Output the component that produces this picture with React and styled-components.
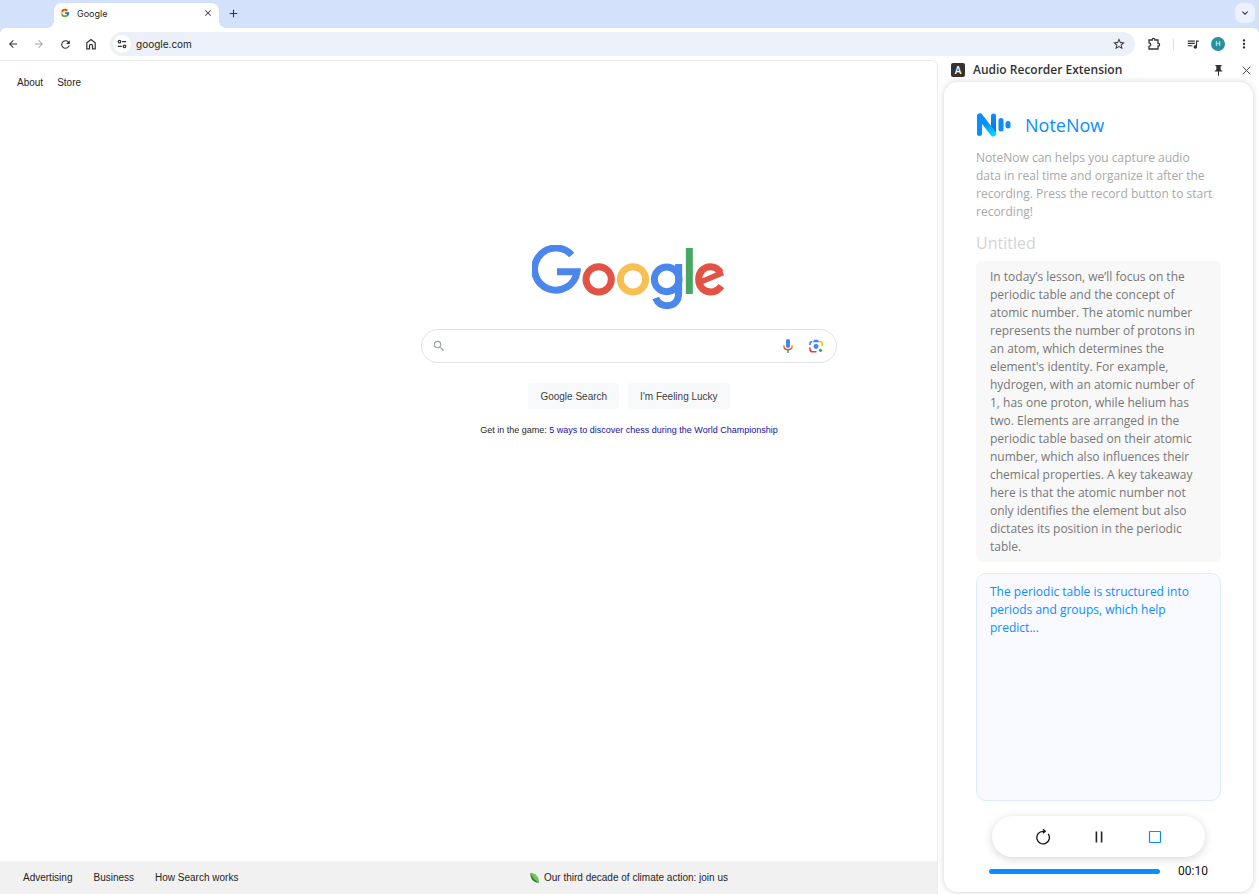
import React from "react";
import styled, { createGlobalStyle } from "styled-components";
import { FcGoogle } from "react-icons/fc";
import {
  MdArrowBack,
  MdArrowForward,
  MdRefresh,
  MdStarBorder,
  MdQueueMusic,
  MdMoreVert,
  MdClose,
  MdAdd,
  MdKeyboardArrowDown,
  MdPushPin,
  MdSearch,
} from "react-icons/md";

const SiteIcon = () => (
  <svg width="10" height="10" viewBox="0 0 12 12" fill="none" stroke="#333" strokeWidth="1.5">
    <circle cx="3" cy="3.2" r="1.5" />
    <path d="M6.2 3.2H11M1 8.8h4.800" />
    <circle cx="9" cy="8.8" r="1.5" />
  </svg>
);

const HomeIcon = () => (
  <svg width="12" height="12" viewBox="0 0 12 12" fill="none" stroke="#333" strokeWidth="1.200">
    <path d="M1.800 4.800L6 1.500l4.200 3.300V10.800H7.500V7.800a1.500 1.500 0 0 0-3 0v3H1.800z" />
  </svg>
);

const PuzzleIcon = () => (
  <svg width="14" height="14" viewBox="0 0 14 14" fill="none" stroke="#333" strokeWidth="1.300">
    <path d="M2 3h3.300V2.600a1.300 1.300 0 0 1 2.600 0V3H11v3.400h.3a1.300 1.300 0 0 1 0 2.600H11v3H2V9.300a1.700 1.700 0 0 0 0-3.400z" />
  </svg>
);

const GoogleLogo = () => (
  <svg width="194" height="65" viewBox="36 27 582 195" fill="none" strokeWidth="21" role="img" aria-label="Google">
    <path stroke="#4a86ec" d="M155 57A64 63 0 1 0 171 107H111" />
    <circle stroke="#e25345" cx="236" cy="130" r="38" />
    <circle stroke="#f8bf53" cx="339" cy="130" r="38" />
    <circle stroke="#4a86ec" cx="440" cy="130" r="37" />
    <path stroke="#4a86ec" d="M476 84V170C476 196 462 209 441 209C425 209 413 201 407 186" />
    <path stroke="#47a662" d="M508 36V174" />
    <path stroke="#e25345" d="M604 150C596 162 586 168 572 168C551 168 536 152 536 130C536 108 551 92 571 92C585 92 595 99 601 110" />
    <path stroke="#e25345" strokeWidth="17" d="M609 110L542 138" />
  </svg>
);

const MicIcon = () => (
  <svg width="12" height="16" viewBox="0 0 12 16" fill="none">
    <rect x="4" y="1" width="4" height="9" rx="2" fill="#4285f4" />
    <path d="M1.8 7.5c0 2.600 1.800 4.200 4.200 4.200" stroke="#ea4335" strokeWidth="1.400" />
    <path d="M10.200 7.500c0 2.600-1.800 4.200-4.200 4.200" stroke="#ea4335" strokeWidth="1.400" />
    <path d="M10.200 7.500c0 1-.2 1.800-.7 2.500M1.800 7.500c0 .7.100 1.300.4 1.900" stroke="#fbbc04" strokeWidth="1.400" />
    <path d="M6 11.800V15" stroke="#34a853" strokeWidth="1.400" />
  </svg>
);

const LensIcon = () => (
  <svg width="14" height="14" viewBox="0 0 14 14" fill="none" strokeWidth="1.600">
    <path d="M1 6V4.800C1 3.300 2 2.500 3.300 2.500" stroke="#4285f4" />
    <path d="M4 3.200L5 .8h4l1 2.400z" fill="#4285f4" />
    <path d="M10 2.500h.7c1.500 0 2.500.900 2.500 2.300V7" stroke="#fbbc04" />
    <path d="M1 8.500v1.700c0 1.600 1 2.600 2.500 2.600H7.500" stroke="#ea4335" />
    <circle cx="7" cy="7.500" r="2.400" fill="#4285f4" />
    <circle cx="11.500" cy="11.300" r="1.600" fill="#34a853" />
  </svg>
);

const LeafIcon = () => (
  <svg width="10" height="12" viewBox="0 0 10 12">
    <path d="M.5 .8C5 1 9.500 4.500 9 10.800C3.500 10.500 .2 7 .5 .8z" fill="#79c257" />
    <path d="M.5 .8C1.500 5 4.500 8.500 9 10.800C3.500 10.500 .2 7 .5 .8z" fill="#1d7a3d" />
  </svg>
);

const NoteNowLogo = () => (
  <svg width="36" height="24" viewBox="0 0 36 24" strokeLinecap="round" fill="none">
    <defs>
      <linearGradient id="diag" x1="5" y1="3" x2="18" y2="22" gradientUnits="userSpaceOnUse">
        <stop offset="0.4" stopColor="#0a8dff" />
        <stop offset="1" stopColor="#00dcff" />
      </linearGradient>
      <linearGradient id="stem" x1="0" y1="2" x2="0" y2="16" gradientUnits="userSpaceOnUse">
        <stop offset="0" stopColor="#0a8dff" />
        <stop offset="1" stopColor="#0878e0" />
      </linearGradient>
    </defs>
    <path d="M17.500 3V20" stroke="url(#stem)" strokeWidth="5" />
    <path d="M4 3.500L17.200 20.500" stroke="url(#diag)" strokeWidth="6" />
    <path d="M3.500 3V20.500" stroke="#0a8dff" strokeWidth="5" />
    <path d="M25 7.500V16" stroke="#0a8dff" strokeWidth="5" />
    <path d="M32 10.500V13" stroke="#0a8dff" strokeWidth="5" />
  </svg>
);

const RestartIcon = () => (
  <svg width="16" height="16" viewBox="0 0 16 16" fill="none" stroke="#111" strokeWidth="1.300">
    <path d="M13.200 4.900A6.300 6.300 0 1 1 8 2.300h1.500" />
    <path d="M7.800 .3L10.300 2.300L7.800 4.300" />
  </svg>
);

const PauseIcon = () => (
  <svg width="16" height="16" viewBox="0 0 16 16" stroke="#222" strokeWidth="1.600">
    <path d="M5.400 2.500v11M10.600 2.500v11" />
  </svg>
);

const StopIcon = () => (
  <svg width="16" height="16" viewBox="0 0 16 16" fill="none" stroke="#0a8dff" strokeWidth="1.200">
    <rect x="2.500" y="2.500" width="11" height="11" rx="0.500" />
  </svg>
);

const App = () => {
  return (
    <Browser>
      <GlobalStyle />
      <TabStrip>
        <Tab>
          <FcGoogle size={10} />
          <span>Google</span>
          <IconButton aria-label="Close tab" $w={12}>
            <MdClose size={10} />
          </IconButton>
        </Tab>
        <IconButton aria-label="New tab" $w={28}>
          <MdAdd size={13} />
        </IconButton>
        <TabSearch aria-label="Search tabs">
          <MdKeyboardArrowDown size={12} />
        </TabSearch>
      </TabStrip>
      <Toolbar>
        <NavButtons>
          <IconButton aria-label="Back" $w={26}>
            <MdArrowBack size={12} />
          </IconButton>
          <IconButton aria-label="Forward" $w={26} $color="#a5a5a5">
            <MdArrowForward size={12} />
          </IconButton>
          <IconButton aria-label="Reload" $w={26}>
            <MdRefresh size={13} />
          </IconButton>
          <IconButton aria-label="Home" $w={26}>
            <HomeIcon />
          </IconButton>
        </NavButtons>
        <AddressBar>
          <SiteBadge>
            <SiteIcon />
          </SiteBadge>
          <AddressInput aria-label="Address" defaultValue="google.com" />
          <IconButton aria-label="Bookmark" $w={32}>
            <MdStarBorder size={14} />
          </IconButton>
        </AddressBar>
        <Tools>
          <IconButton aria-label="Extensions" $w={30}>
            <PuzzleIcon />
          </IconButton>
          <Divider />
          <IconButton aria-label="Media" $w={30}>
            <MdQueueMusic size={14} />
          </IconButton>
          <Avatar aria-label="Profile">H</Avatar>
          <IconButton aria-label="Menu" $w={30}>
            <MdMoreVert size={14} />
          </IconButton>
        </Tools>
      </Toolbar>

      <Content>
        <Page>
          <TopLinks>
            <a href="#about">About</a>
            <a href="#store">Store</a>
          </TopLinks>
          <Center>
            <GoogleLogo />
            <SearchBox>
              <MdSearch size={14} color="#9aa0a6" />
              <SearchInput aria-label="Search" />
              <IconButton aria-label="Search by voice" $w={28}>
                <MicIcon />
              </IconButton>
              <IconButton aria-label="Search by image" $w={28}>
                <LensIcon />
              </IconButton>
            </SearchBox>
            <Actions>
              <SearchButton>Google Search</SearchButton>
              <SearchButton>I'm Feeling Lucky</SearchButton>
            </Actions>
            <Promo>
              Get in the game:{" "}
              <a href="#chess">5 ways to discover chess during the World Championship</a>
            </Promo>
          </Center>
          <Footer>
            <FooterLinks>
              <a href="#ads">Advertising</a>
              <a href="#business">Business</a>
              <a href="#how">How Search works</a>
            </FooterLinks>
            <ClimateLink href="#climate">
              <LeafIcon />
              Our third decade of climate action: join us
            </ClimateLink>
          </Footer>
        </Page>

        <SidePanel>
          <PanelHeader>
            <PanelBadge>A</PanelBadge>
            <h2>Audio Recorder Extension</h2>
            <IconButton aria-label="Pin" $w={28}>
              <MdPushPin size={13} />
            </IconButton>
            <IconButton aria-label="Close panel" $w={28}>
              <svg width="9" height="9" viewBox="0 0 9 9" stroke="#444" strokeWidth="1">
                <path d="M.7 .7l7.600 7.600M8.300 .7L.7 8.300" />
              </svg>
            </IconButton>
          </PanelHeader>
          <Card>
            <Brand>
              <NoteNowLogo />
              <h1>NoteNow</h1>
            </Brand>
            <Intro>
              NoteNow can helps you capture audio data in real time and organize
              it after the recording. Press the record button to start recording!
            </Intro>
            <TitleInput aria-label="Title" placeholder="Untitled" />
            <Transcript>
              In today’s lesson, we’ll focus on the periodic table and the
              concept of atomic number. The atomic number represents the number
              of protons in an atom, which determines the element's identity. For
              example, hydrogen, with an atomic number of 1, has one proton,
              while helium has two. Elements are arranged in the periodic table
              based on their atomic number, which also influences their chemical
              properties. A key takeaway here is that the atomic number not only
              identifies the element but also dictates its position in the
              periodic table.
            </Transcript>
            <LiveText>
              The periodic table is structured into periods and groups, which
              help predict...
            </LiveText>
            <Controls>
              <IconButton aria-label="Restart" $w={56}>
                <RestartIcon />
              </IconButton>
              <IconButton aria-label="Pause" $w={56}>
                <PauseIcon />
              </IconButton>
              <IconButton aria-label="Stop" $w={56}>
                <StopIcon />
              </IconButton>
            </Controls>
            <Timeline>
              <Bar />
              <time>00:10</time>
            </Timeline>
          </Card>
        </SidePanel>
      </Content>
    </Browser>
  );
};

export default App;

const GlobalStyle = createGlobalStyle`
  * {
    box-sizing: border-box;
  }
  body {
    margin: 0;
    background: #fff;
    color: #1f1f1f;
    font-family: "Liberation Sans", Arial, sans-serif;
    font-size: 10px;
  }
  h1, h2, p {
    margin: 0;
  }
  a {
    color: inherit;
    text-decoration: none;
  }
  button, input {
    border: 0;
    padding: 0;
    background: none;
    font: inherit;
    color: inherit;
    outline: none;
  }
  svg {
    display: block;
    flex-shrink: 0;
  }
`;

const Browser = styled.div`
  min-height: 100vh;
  display: flex;
  flex-direction: column;
  background: #d3e1fa;
`;

const IconButton = styled.button`
  display: flex;
  align-items: center;
  justify-content: center;
  flex-shrink: 0;
  width: ${(p) => p.$w}px;
  color: ${(p) => p.$color || "#333"};
`;

const TabStrip = styled.div`
  display: flex;
  align-items: center;
  height: 28px;
  padding: 0 4px 2px 54px;
`;

const Tab = styled.div`
  position: relative;
  display: flex;
  align-items: center;
  align-self: flex-end;
  gap: 7px;
  width: 165px;
  height: 25px;
  margin-bottom: -2px;
  padding: 0 5px 5px 6px;
  background: #fff;
  border-radius: 8px 8px 0 0;
  font-family: Inter, sans-serif;
  font-size: 9px;
  span {
    flex: 1;
  }
  &::before,
  &::after {
    content: "";
    position: absolute;
    bottom: 0;
    width: 8px;
    height: 8px;
  }
  &::before {
    left: -8px;
    background: radial-gradient(circle at 0 0, transparent 8px, #fff 8px);
  }
  &::after {
    right: -8px;
    background: radial-gradient(circle at 100% 0, transparent 8px, #fff 8px);
  }
`;

const TabSearch = styled(IconButton)`
  width: 20px;
  height: 20px;
  margin-left: auto;
  border-radius: 7px;
  background: #ebf1fd;
`;

const Toolbar = styled.div`
  display: flex;
  align-items: center;
  height: 32px;
  background: #fff;
  border-radius: 6px 6px 0 0;
`;

const NavButtons = styled.div`
  display: flex;
  padding-right: 6px;
`;

const AddressBar = styled.div`
  flex: 1;
  display: flex;
  align-items: center;
  height: 24px;
  padding-left: 3px;
  border-radius: 12px;
  background: #ebf0f9;
`;

const SiteBadge = styled.span`
  display: flex;
  align-items: center;
  justify-content: center;
  width: 18px;
  height: 18px;
  margin-right: 5px;
  border-radius: 50%;
  background: #fff;
`;

const AddressInput = styled.input`
  flex: 1;
  min-width: 0;
  font-family: Inter, sans-serif;
  font-size: 10px;
`;

const Tools = styled.div`
  display: flex;
  align-items: center;
  padding-left: 4px;
`;

const Divider = styled.span`
  width: 1px;
  height: 11px;
  margin: 0 4px;
  background: #cfdff7;
`;

const Avatar = styled.button`
  width: 14px;
  height: 14px;
  margin: 0 4px 0 3px;
  border-radius: 50%;
  background: #26939c;
  color: #fff;
  font-family: Roboto, sans-serif;
  font-size: 7px;
  line-height: 14px;
`;

const Content = styled.div`
  flex: 1;
  display: flex;
  background: #fff;
`;

const Page = styled.main`
  flex: 1;
  display: flex;
  flex-direction: column;
  border: 1px solid #ececec;
  border-width: 1px 1px 0 0;
  border-top-right-radius: 6px;
  overflow: hidden;
`;

const TopLinks = styled.nav`
  display: flex;
  gap: 14px;
  padding: 16px 17px 0;
  line-height: 12px;
`;

/* the left padding equals the side panel, so the search stays in the middle of the window */
const Center = styled.div`
  flex: 1;
  display: flex;
  flex-direction: column;
  align-items: center;
  padding: 156px 0 0 321px;
`;

const SearchBox = styled.label`
  display: flex;
  align-items: center;
  width: 416px;
  height: 34px;
  margin-top: 19px;
  padding: 0 6px 0 10px;
  border: 1px solid #e2e3e5;
  border-radius: 17px;
`;

const SearchInput = styled.input`
  flex: 1;
  min-width: 0;
  font-size: 12px;
`;

const Actions = styled.div`
  display: flex;
  gap: 9px;
  margin-top: 20px;
`;

const SearchButton = styled.button`
  height: 26px;
  padding: 0 12px;
  border-radius: 3px;
  background: #f8f9fa;
  color: #3c4043;
`;

const Promo = styled.p`
  margin-top: 15px;
  font-size: 9px;
  line-height: 12px;
  a {
    color: #1a0dab;
  }
`;

const Footer = styled.footer`
  display: grid;
  grid-template-columns: 298px 1fr;
  align-items: center;
  height: 33px;
  padding-left: 23px;
  background: #f1f1f1;
`;

const FooterLinks = styled.nav`
  display: flex;
  gap: 21px;
`;

const ClimateLink = styled.a`
  display: flex;
  align-items: center;
  justify-content: center;
  gap: 4px;
`;

const SidePanel = styled.aside`
  flex-shrink: 0;
  width: 321px;
  display: flex;
  flex-direction: column;
  padding: 0 6px 2px;
  font-family: "Open Sans", sans-serif;
`;

const PanelHeader = styled.header`
  display: flex;
  align-items: center;
  height: 20px;
  margin-bottom: 2px;
  padding-left: 7px;
  margin-right: -7px;
  h2 {
    flex: 1;
    font-size: 12px;
    font-weight: 600;
    line-height: 18px;
    color: #333;
  }
`;

const PanelBadge = styled.span`
  width: 14px;
  height: 14px;
  margin-right: 8px;
  border-radius: 2px;
  background: #333;
  color: #fff;
  font-size: 10px;
  font-weight: 600;
  line-height: 14px;
  text-align: center;
`;

const Card = styled.section`
  flex: 1;
  display: flex;
  flex-direction: column;
  padding: 31px 32px 12px;
  border-radius: 14px;
  background: #fff;
  box-shadow: 0 0 6px rgba(0, 0, 0, 0.18);
`;

const Brand = styled.div`
  display: flex;
  align-items: center;
  gap: 13px;
  h1 {
    color: #0a8dff;
    font-size: 18px;
    font-weight: 500;
    line-height: 24px;
  }
`;

const Intro = styled.p`
  margin-top: 12px;
  padding-right: 4px;
  color: #a8a8a8;
  font-size: 12px;
  line-height: 18px;
`;

const TitleInput = styled.input`
  width: 100%;
  height: 24px;
  margin: 10px 0 6px;
  font-size: 16px;
  &::placeholder {
    color: #d4d4d4;
    opacity: 1;
  }
`;

const Transcript = styled.p`
  padding: 7px 14px 6px;
  border-radius: 6px;
  background: #f8f8f8;
  color: #777;
  font-size: 12px;
  line-height: 18px;
`;

const LiveText = styled.p`
  flex: 1;
  margin-top: 11px;
  padding: 9px 13px;
  border: 1px solid #dcecfd;
  border-radius: 10px;
  background: #f8faff;
  color: #0a8dff;
  font-size: 12px;
  line-height: 18px;
`;

const Controls = styled.div`
  display: flex;
  justify-content: center;
  height: 41px;
  margin: 15px 16px 0;
  border-radius: 21px;
  background: #fff;
  box-shadow: 0 2px 10px rgba(0, 0, 0, 0.16);
`;

const Timeline = styled.div`
  display: flex;
  align-items: center;
  gap: 18px;
  margin-top: 5px;
  padding: 0 13px;
  time {
    color: #111;
    font-family: Roboto, sans-serif;
    font-size: 12px;
    line-height: 18px;
  }
`;

const Bar = styled.div`
  flex: 1;
  height: 5px;
  border-radius: 3px;
  background: #0a8dff;
`;
